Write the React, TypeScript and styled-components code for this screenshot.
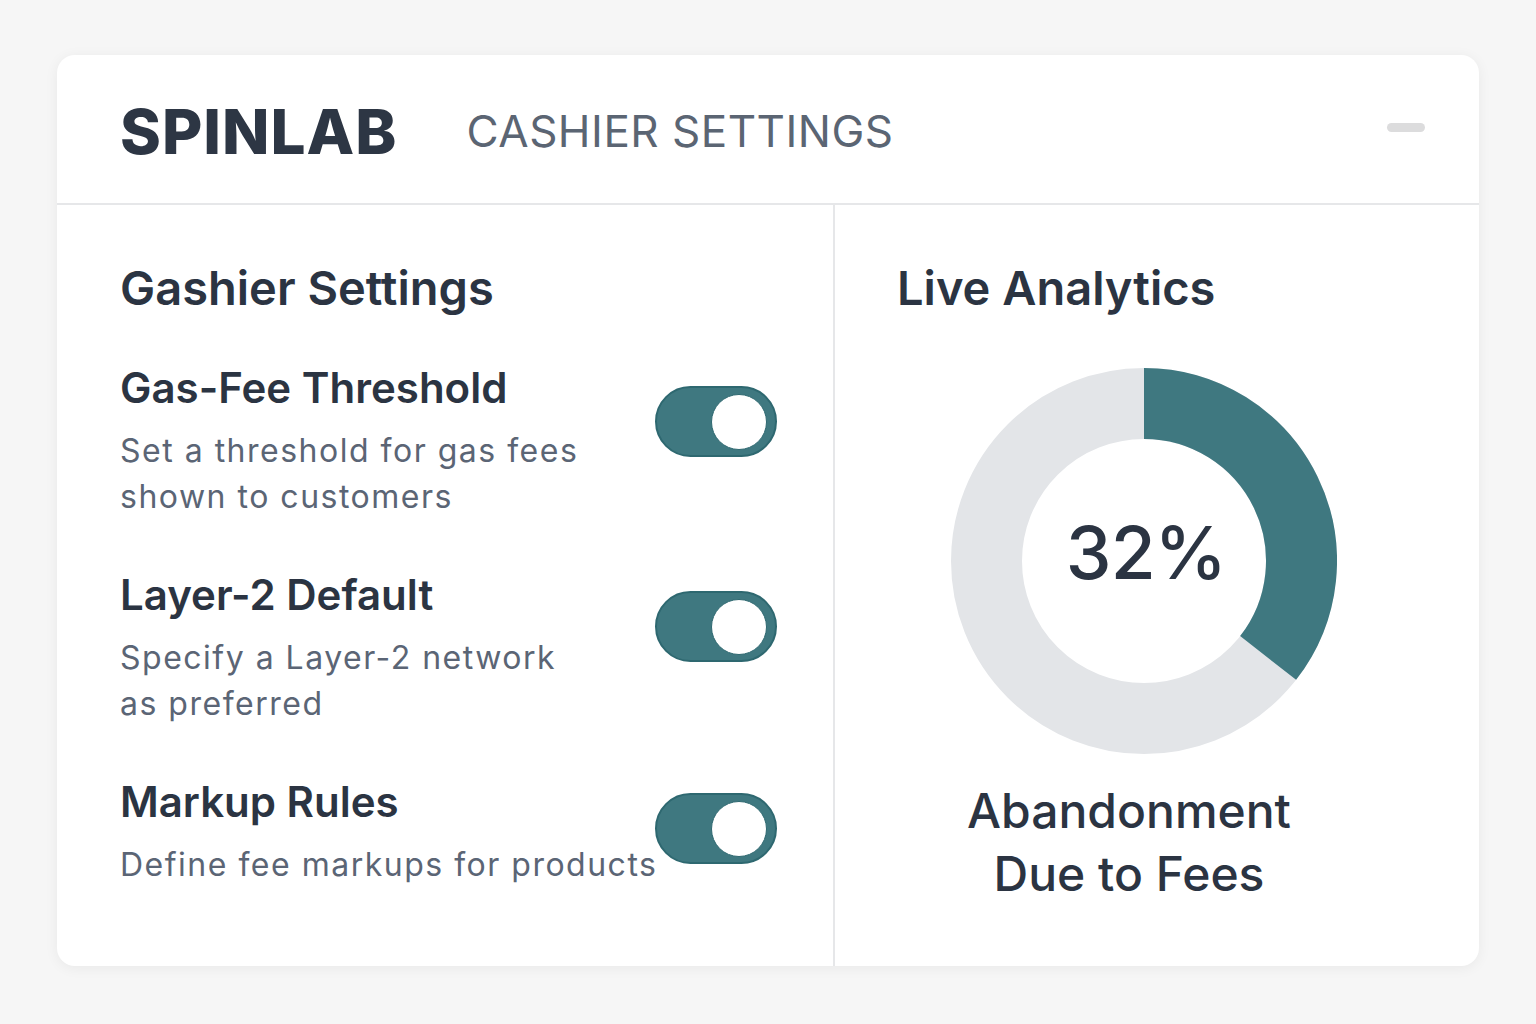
import styled, { createGlobalStyle } from "styled-components";

const GlobalStyle = createGlobalStyle`
  html, body {
    margin: 0;
    padding: 0;
    background: #f6f6f6;
    font-family: "Inter", "Noto Sans", sans-serif;
  }
`;

const Page = styled.div`
  width: 1536px;
  height: 1024px;
  box-sizing: border-box;
  padding: 55px 57px 0 57px;
`;

const Card = styled.div`
  width: 1422px;
  height: 911px;
  background: #ffffff;
  border-radius: 18px;
  box-shadow: 0 2px 14px rgba(0, 0, 0, 0.06);
  display: flex;
  flex-direction: column;
  overflow: hidden;
`;

const Header = styled.header`
  height: 148px;
  flex-shrink: 0;
  display: flex;
  align-items: center;
  padding: 0 54px 0 63px;
  border-bottom: 2px solid #e6e7e9;
`;

const Brand = styled.div`
  font-size: 62px;
  font-weight: 800;
  letter-spacing: 1px;
  color: #2d3644;
  margin-right: 69px;
  margin-top: 4px;
`;

const HeaderTitle = styled.div`
  font-size: 44px;
  font-weight: 400;
  letter-spacing: 0.5px;
  color: #5b6573;
  flex: 1;
  margin-top: 4px;
`;

const Minimize = styled.div`
  width: 38px;
  height: 9px;
  border-radius: 5px;
  background: #dcdcdd;
  margin-top: -4px;
`;

const Body = styled.div`
  flex: 1;
  display: grid;
  grid-template-columns: 776px 1fr;
`;

const Column = styled.section<{ $divider?: boolean }>`
  box-sizing: border-box;
  padding: 55px 56px 0 ${(p) => (p.$divider ? "62px" : "63px")};
  border-left: ${(p) => (p.$divider ? "2px solid #e6e7e9" : "none")};
  display: flex;
  flex-direction: column;
`;

const SectionTitle = styled.h2`
  margin: 0;
  font-size: 47px;
  line-height: 56px;
  font-weight: 600;
  color: #2b3442;
`;

const Rows = styled.div`
  margin-top: 48px;
  display: flex;
  flex-direction: column;
  gap: 51px;
`;

const Row = styled.div`
  display: flex;
  align-items: flex-start;
`;

const RowText = styled.div`
  flex: 1;
  min-width: 0;
  display: flex;
  flex-direction: column;
  gap: 16px;
`;

const RowTitle = styled.div`
  font-size: 42px;
  line-height: 48px;
  font-weight: 600;
  color: #2b3442;
`;

const RowDesc = styled.div`
  font-size: 32px;
  line-height: 46px;
  font-weight: 400;
  letter-spacing: 1.5px;
  color: #5b6575;
  white-space: pre;
`;

const Toggle = styled.div<{ $offset: number }>`
  width: 122px;
  height: 71px;
  box-sizing: border-box;
  flex-shrink: 0;
  margin-top: ${(p) => p.$offset}px;
  border-radius: 36px;
  background: #3f7880;
  border: 2px solid #2e6870;
  display: flex;
  align-items: center;
  justify-content: flex-end;
  padding-right: 8px;
`;

const Knob = styled.div`
  width: 54px;
  height: 54px;
  border-radius: 50%;
  background: #ffffff;
  border: 1px solid #2e6870;
`;

const ChartArea = styled.div`
  margin-top: 52px;
  margin-left: 54px;
  width: 386px;
  display: flex;
  flex-direction: column;
  align-items: center;
`;

const Donut = styled.div`
  position: relative;
  width: 386px;
  height: 386px;
`;

const DonutValue = styled.div`
  position: absolute;
  inset: 0;
  display: flex;
  align-items: center;
  justify-content: center;
  padding-bottom: 18px;
  padding-left: 4px;
  font-size: 73px;
  font-weight: 500;
  letter-spacing: -1px;
  color: #2b3442;
`;

const Caption = styled.div`
  margin-top: 25px;
  margin-right: 30px;
  text-align: center;
  font-size: 48px;
  line-height: 63px;
  font-weight: 500;
  color: #2b3442;
  white-space: nowrap;
`;

const settings = [
  {
    title: "Gas-Fee Threshold",
    desc: "Set a threshold for gas fees\nshown to customers",
    offset: 22,
  },
  {
    title: "Layer-2 Default",
    desc: "Specify a Layer-2 network\nas preferred",
    offset: 20,
  },
  {
    title: "Markup Rules",
    desc: "Define fee markups for products",
    offset: 15,
  },
];

function DonutChart({ angle }: { angle: number }) {
  const c = 193;
  const r = 157.5;
  const rad = (angle * Math.PI) / 180;
  const x = c + r * Math.sin(rad);
  const y = c - r * Math.cos(rad);
  const large = angle > 180 ? 1 : 0;
  return (
    <svg width="386" height="386" viewBox="0 0 386 386">
      <circle cx={c} cy={c} r={r} fill="none" stroke="#e3e5e8" strokeWidth="71" />
      <path
        d={`M ${c} ${c - r} A ${r} ${r} 0 ${large} 1 ${x} ${y}`}
        fill="none"
        stroke="#3f7880"
        strokeWidth="71"
      />
    </svg>
  );
}

export default function App() {
  return (
    <>
      <GlobalStyle />
      <Page>
        <Card>
          <Header>
            <Brand>SPINLAB</Brand>
            <HeaderTitle>CASHIER SETTINGS</HeaderTitle>
            <Minimize />
          </Header>
          <Body>
            <Column>
              <SectionTitle>Gashier Settings</SectionTitle>
              <Rows>
                {settings.map((s) => (
                  <Row key={s.title}>
                    <RowText>
                      <RowTitle>{s.title}</RowTitle>
                      <RowDesc>{s.desc}</RowDesc>
                    </RowText>
                    <Toggle $offset={s.offset}>
                      <Knob />
                    </Toggle>
                  </Row>
                ))}
              </Rows>
            </Column>
            <Column $divider>
              <SectionTitle>Live Analytics</SectionTitle>
              <ChartArea>
                <Donut>
                  <DonutChart angle={128} />
                  <DonutValue>32%</DonutValue>
                </Donut>
                <Caption>
                  Abandonment
                  <br />
                  Due to Fees
                </Caption>
              </ChartArea>
            </Column>
          </Body>
        </Card>
      </Page>
    </>
  );
}
